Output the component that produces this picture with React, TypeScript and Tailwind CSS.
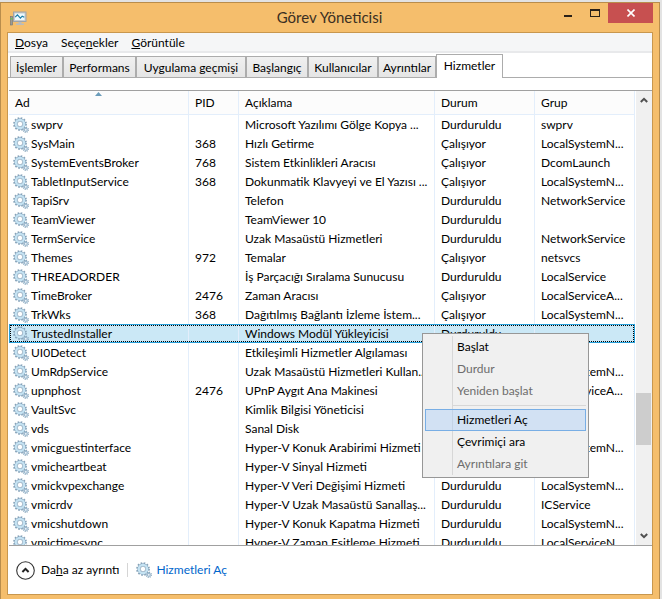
import { Fragment } from "react"

const tabs = [
  { label: "İşlemler", width: "w-[53px]" },
  { label: "Performans", width: "w-[73px]" },
  { label: "Uygulama geçmişi", width: "w-[110px]" },
  { label: "Başlangıç", width: "w-[62px]" },
  { label: "Kullanıcılar", width: "w-[70px]" },
  { label: "Ayrıntılar", width: "w-[58px]" },
  { label: "Hizmetler", width: "w-[67px]", active: true },
]

const stopped = "Durduruldu"
const running = "Çalışıyor"

const services = [
  ["swprv", "", "Microsoft Yazılımı Gölge Kopya ...", stopped, "swprv"],
  ["SysMain", "368", "Hızlı Getirme", running, "LocalSystemN..."],
  ["SystemEventsBroker", "768", "Sistem Etkinlikleri Aracısı", running, "DcomLaunch"],
  ["TabletInputService", "368", "Dokunmatik Klavyeyi ve El Yazısı ...", running, "LocalSystemN..."],
  ["TapiSrv", "", "Telefon", stopped, "NetworkService"],
  ["TeamViewer", "", "TeamViewer 10", stopped, ""],
  ["TermService", "", "Uzak Masaüstü Hizmetleri", stopped, "NetworkService"],
  ["Themes", "972", "Temalar", running, "netsvcs"],
  ["THREADORDER", "", "İş Parçacığı Sıralama Sunucusu", stopped, "LocalService"],
  ["TimeBroker", "2476", "Zaman Aracısı", running, "LocalServiceA..."],
  ["TrkWks", "368", "Dağıtılmış Bağlantı İzleme İstem...", running, "LocalSystemN..."],
  ["TrustedInstaller", "", "Windows Modül Yükleyicisi", stopped, ""],
  ["UI0Detect", "", "Etkileşimli Hizmetler Algılaması", stopped, ""],
  ["UmRdpService", "", "Uzak Masaüstü Hizmetleri Kullan...", stopped, "LocalSystemN..."],
  ["upnphost", "2476", "UPnP Aygıt Ana Makinesi", running, "LocalServiceA..."],
  ["VaultSvc", "", "Kimlik Bilgisi Yöneticisi", stopped, ""],
  ["vds", "", "Sanal Disk", stopped, ""],
  ["vmicguestinterface", "", "Hyper-V Konuk Arabirimi Hizmeti", stopped, "LocalSystemN..."],
  ["vmicheartbeat", "", "Hyper-V Sinyal Hizmeti", stopped, ""],
  ["vmickvpexchange", "", "Hyper-V Veri Değişimi Hizmeti", stopped, "LocalSystemN..."],
  ["vmicrdv", "", "Hyper-V Uzak Masaüstü Sanallaş...", stopped, "ICService"],
  ["vmicshutdown", "", "Hyper-V Konuk Kapatma Hizmeti", stopped, "LocalSystemN..."],
  ["vmictimesync", "", "Hyper-V Zaman Eşitleme Hizmeti", stopped, "LocalServiceN..."],
]

const menuItems = [
  { label: "Başlat" },
  { label: "Durdur", disabled: true },
  { label: "Yeniden başlat", disabled: true, last: true },
  { label: "Hizmetleri Aç", hot: true },
  { label: "Çevrimiçi ara" },
  { label: "Ayrıntılara git", disabled: true },
]

const Gears = () => (
  <svg width="16" height="16" viewBox="0 0 16 16" className="shrink-0" aria-hidden="true">
    <circle cx="7" cy="7" r="6" fill="none" stroke="#86a2b8" strokeWidth="1.8" strokeDasharray="1.6 1.54" />
    <circle cx="7" cy="7" r="4.2" fill="none" stroke="#86a5bd" strokeWidth="3" />
    <circle cx="7" cy="7" r="4.2" fill="none" stroke="#c5e3f3" strokeWidth="2.2" />
    <circle cx="7" cy="7" r="2.7" fill="#fff" stroke="#8fabc0" strokeWidth="0.7" />
    <circle cx="12.8" cy="12.8" r="2.5" fill="none" stroke="#8aa7bd" strokeWidth="1.4" strokeDasharray="1 0.96" />
    <circle cx="12.8" cy="12.8" r="1.5" fill="#f4f9fc" stroke="#9dbad0" strokeWidth="1.2" />
  </svg>
)

const TitleBar = () => (
  <header className="flex h-[29px] shrink-0 items-start">
    <div className="flex w-[98px] pl-[3px] pt-2">
      <svg width="17" height="16" viewBox="0 0 17 16" aria-hidden="true">
        <rect x="0.5" y="5.5" width="2" height="8.5" fill="#9a9a9a" stroke="#6f7471" strokeWidth="0.6" />
        <rect x="0.8" y="7" width="1.5" height="1.5" fill="#5fd24c" />
        <rect x="3.5" y="1" width="12.5" height="9.5" fill="#c9cccf" stroke="#a0a4a8" />
        <rect x="5" y="2.5" width="9.5" height="6.5" fill="#eefafe" />
        <path d="M5.2 6.2 L7.4 3.9 L10.4 7.2 L12.2 5.2 L14.3 6.2" fill="none" stroke="#1d7fa8" strokeWidth="1.2" />
        <path d="M8.5 11h3v1.4h2.5v1.6H6v-1.6h2.5z" fill="#b8bcc0" />
      </svg>
    </div>
    <h1 className="flex-1 pt-0.5 text-center text-[15px] leading-[25px] text-[#3a2f22]">Görev Yöneticisi</h1>
    <div className="flex">
      <button type="button" aria-label="Simge durumuna küçült" className="flex h-5 w-7 justify-center pt-3">
        <span className="h-0.5 w-2 bg-[#2a2118]" />
      </button>
      <button type="button" aria-label="Ekranı kapla" className="flex h-5 w-[26px] justify-center pt-1.5">
        <span className="h-2 w-2.5 border border-t-2 border-[#2a2118]" />
      </button>
      <button type="button" aria-label="Kapat" className="flex h-5 w-[45px] items-center justify-center bg-[#c75050]">
        <svg width="8" height="8" viewBox="0 0 8 8" aria-hidden="true">
          <path d="M0.5 0.5 L7.5 7.5 M7.5 0.5 L0.5 7.5" stroke="#fff" strokeWidth="1.6" />
        </svg>
      </button>
    </div>
  </header>
)

const MenuBar = () => (
  <nav className="flex h-5 shrink-0 items-end gap-x-[13px] border-b-2 border-[#e8e9eb] bg-[#f5f6f7] pl-[7px]">
    <button type="button"><u>D</u>osya</button>
    <button type="button">Seçe<u>n</u>ekler</button>
    <button type="button"><u>G</u>örüntüle</button>
  </nav>
)

const Tabs = () => (
  <div role="tablist" className="flex h-[25px] shrink-0 items-end border-b border-[#acacac] pl-0.5">
    {tabs.map((tab) =>
      tab.active ? (
        <button key={tab.label} type="button" role="tab" aria-selected="true"
          className={`${tab.width} -mb-px h-6 border border-b-0 border-[#acacac] bg-white pb-0.5 leading-4`}>
          {tab.label}
        </button>
      ) : (
        <button key={tab.label} type="button" role="tab" aria-selected="false"
          className={`${tab.width} h-[21px] border border-b-0 border-[#acacac] bg-linear-to-b from-[#f0f0f0] to-[#e5e5e5] pt-0.5 leading-4 whitespace-nowrap`}>
          {tab.label}
        </button>
      )
    )}
  </div>
)

const ServiceTable = () => (
  <table className="w-full table-fixed border-separate border-spacing-0 text-left">
    <colgroup>
      <col className="w-[180px]" />
      <col className="w-[50px]" />
      <col />
      <col className="w-[100px]" />
      <col className="w-[100px]" />
    </colgroup>
    <thead>
      <tr className="h-6 bg-[#fcfcfc]">
        {["Ad", "PID", "Açıklama", "Durum", "Grup"].map((name) => (
          <th key={name} className="relative border-r border-b border-[#e3eefb] py-0 pl-1.5 font-normal">
            {name}
            {name === "Ad" && (
              <svg width="7" height="4" viewBox="0 0 7 4" className="absolute inset-x-0 top-px mx-auto" aria-hidden="true">
                <path d="M3.5 0 L7 4 H0z" fill="#6a9cba" />
              </svg>
            )}
          </th>
        ))}
      </tr>
    </thead>
    <tbody>
      {services.map(([name, pid, description, status, group]) => {
        const selected = name === "TrustedInstaller"
        return (
          <tr key={name} className={selected ? "relative h-[19px] bg-[#cbe8f6]" : "h-[19px]"}>
            <td className="border-r border-[#e3eefb] p-0">
              <div className="flex h-[19px] items-center gap-x-0.5 pl-1">
                <Gears />
                <span>{name}</span>
              </div>
              {selected && (
                <div className="absolute inset-0 border border-[#26a0da]">
                  <div className="h-full border border-dotted border-black" />
                </div>
              )}
            </td>
            <td className="border-r border-[#e3eefb] py-0 pl-1.5">{pid}</td>
            <td className="overflow-hidden border-r border-[#e3eefb] py-0 pl-1.5 whitespace-nowrap">{description}</td>
            <td className="border-r border-[#e3eefb] py-0 pl-1.5">{status}</td>
            <td className="overflow-hidden border-r border-[#e3eefb] py-0 pl-1.5 whitespace-nowrap">{group}</td>
          </tr>
        )
      })}
    </tbody>
  </table>
)

const Scrollbar = () => (
  <div className="flex w-4 shrink-0 flex-col items-center justify-between bg-[#f0f0f0] py-1.5">
    <svg width="8" height="6" viewBox="0 0 8 6" aria-hidden="true">
      <path d="M0.8 5 L4 1.8 L7.2 5" fill="none" stroke="#505050" strokeWidth="2" />
    </svg>
    <div className="flex w-full flex-1 flex-col">
      <div className="grow-[290]" />
      <div className="mr-px h-[52px] bg-[#cdcdcd]" />
      <div className="grow-[88]" />
    </div>
    <svg width="8" height="6" viewBox="0 0 8 6" aria-hidden="true">
      <path d="M0.8 1 L4 4.2 L7.2 1" fill="none" stroke="#505050" strokeWidth="2" />
    </svg>
  </div>
)

const ContextMenu = () => (
  <div role="menu" className="absolute left-[413px] top-[242px] w-[167px] border border-[#979797] bg-[#f0f0f0] p-0.5">
    <div className="absolute inset-y-0.5 left-[29px] w-px bg-[#d7d7d7]" />
    {menuItems.map((item) => (
      <Fragment key={item.label}>
        <button type="button" role="menuitem" disabled={item.disabled}
          className={`relative block h-[22px] w-full border pl-[31px] text-left disabled:text-[#6d6d6d] ${
            item.hot ? "border-[#78aee5] bg-[#aecff7]/45" : "border-transparent"
          }`}>
          {item.label}
        </button>
        {item.last && <div className="my-[3px] ml-7 h-px bg-[#d7d7d7]" />}
      </Fragment>
    ))}
  </div>
)

const Footer = () => (
  <footer className="flex h-12 shrink-0 items-center pl-2">
    <button type="button" className="flex items-center gap-x-1.5">
      <svg width="19" height="19" viewBox="0 0 19 19" aria-hidden="true">
        <circle cx="9.5" cy="9.5" r="8.8" fill="#fff" stroke="#333" strokeWidth="1.1" />
        <path d="M6.4 11 L9.5 7.9 L12.6 11" fill="none" stroke="#222" strokeWidth="2" />
      </svg>
      <span>Da<u>h</u>a az ayrıntı</span>
    </button>
    <span className="mx-2 h-[14px] w-px bg-[#d5d5d5]" />
    <a href="#hizmetler" className="flex items-center gap-x-1 text-[#0066cc]">
      <Gears />
      Hizmetleri Aç
    </a>
  </footer>
)

export default function App() {
  return (
    <div className="flex h-screen bg-[#e3e3e3] pt-0.5 pr-0.5 font-['Lato','Open_Sans',sans-serif] text-xs leading-4 text-black">
      <div className="flex min-w-0 flex-1 flex-col border border-b-0 border-[#b98d4c] bg-[#f5be6c] px-1.5 pb-1">
        <TitleBar />
        <main className="flex min-h-0 flex-1 flex-col border border-[#c8974e] bg-white">
          <MenuBar />
          <Tabs />
          <div className="mt-3 ml-px flex min-h-0 flex-1 border-y border-[#a0a0a0]">
            <div className="relative flex min-w-0 flex-1">
              <div className="min-w-0 flex-1 overflow-hidden pr-px">
                <ServiceTable />
              </div>
              <Scrollbar />
              <ContextMenu />
            </div>
          </div>
          <Footer />
        </main>
      </div>
    </div>
  )
}
